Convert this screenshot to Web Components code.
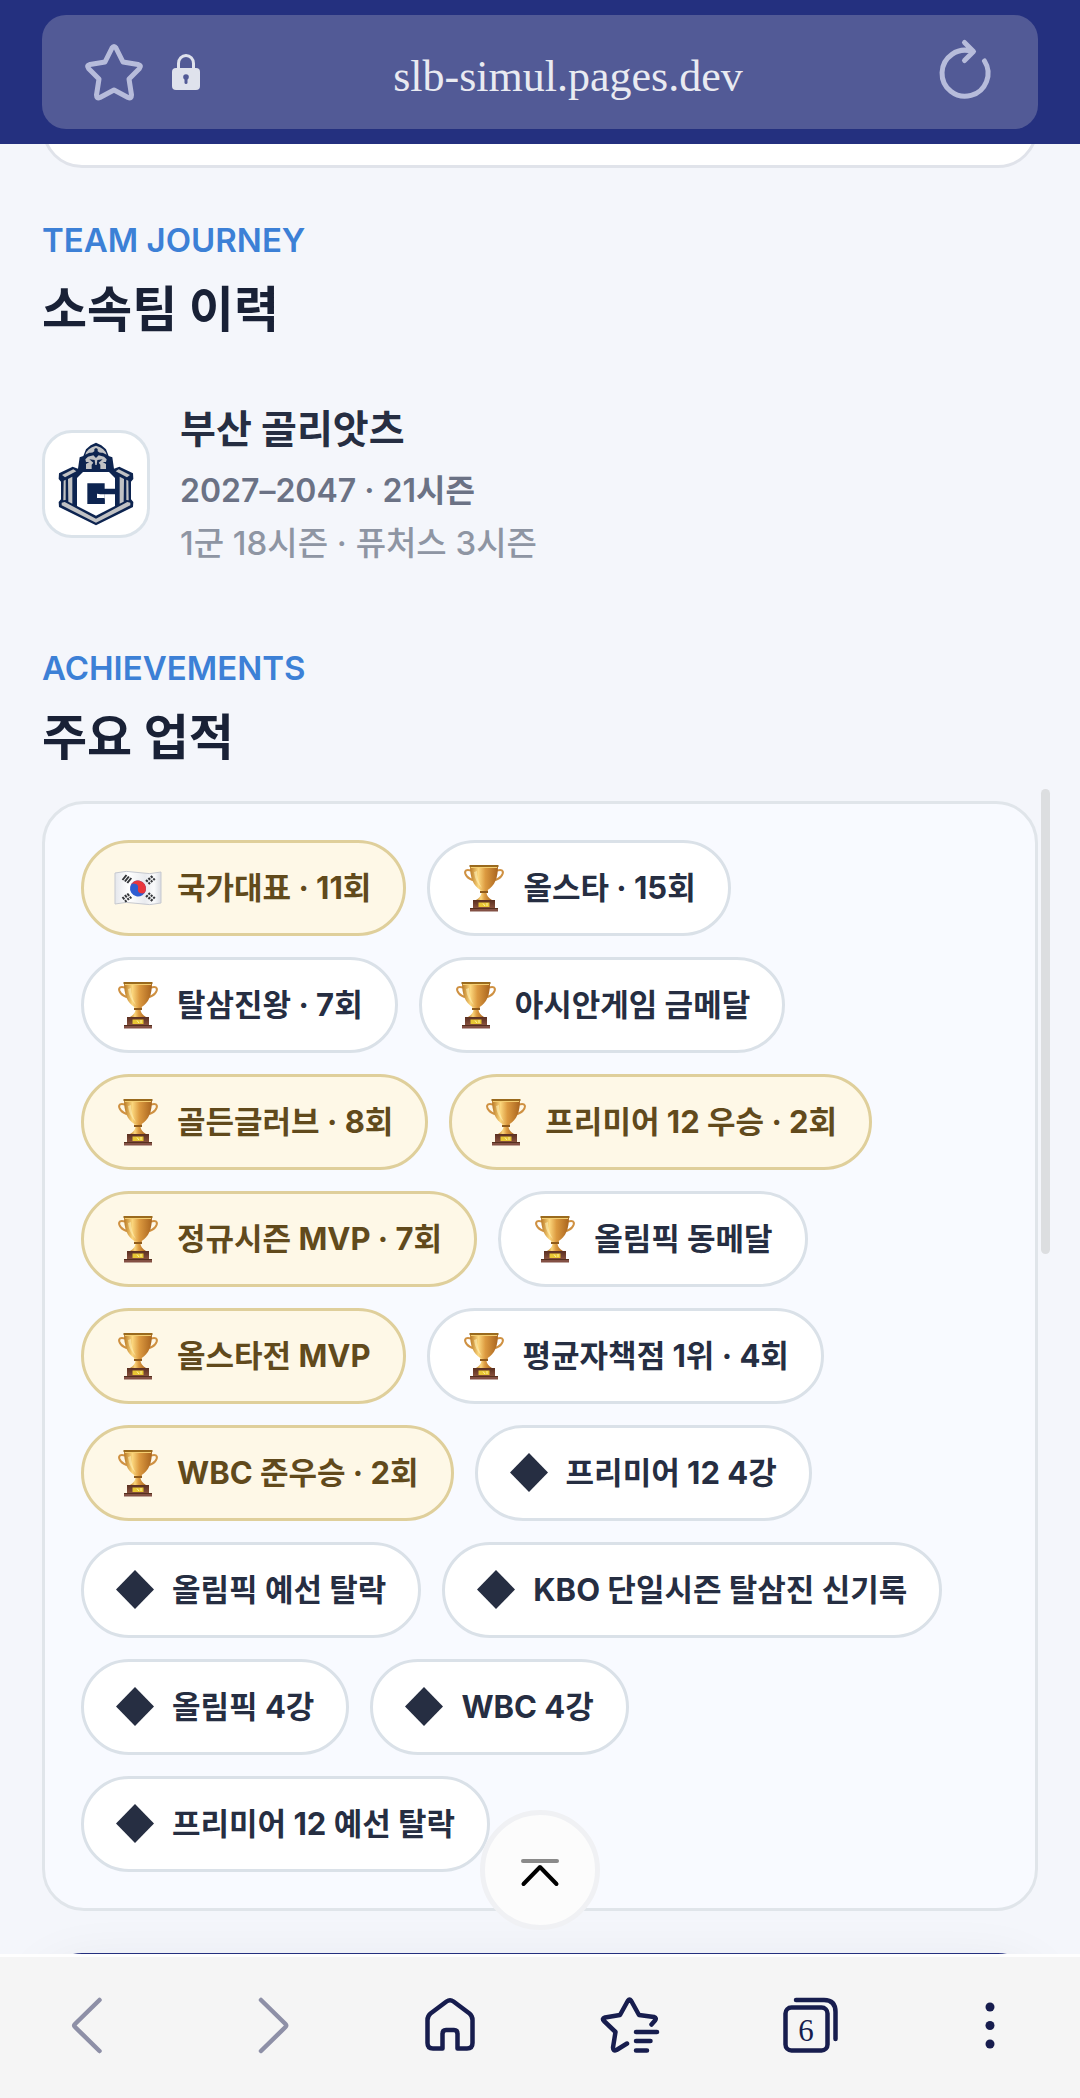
<!DOCTYPE html>
<html lang="ko">
<head>
<meta charset="UTF-8">
<meta name="viewport" content="width=device-width, initial-scale=1">
<title>선수 이력</title>
<style>
  body {
    margin: 0;
    font-family: Inter, "Noto Sans CJK KR", sans-serif;
    background: #f4f6fb;
    color: #192136;
  }
</style>
</head>
<body>
<app-shell>
  <address-bar slot="top" url="slb-simul.pages.dev"></address-bar>

  <peek-card edge="bottom"></peek-card>

  <page-section eyebrow="TEAM JOURNEY" heading="소속팀 이력">
    <team-row name="부산 골리앗츠" period="2027–2047 · 21시즌" detail="1군 18시즌 · 퓨처스 3시즌"></team-row>
  </page-section>

  <page-section eyebrow="ACHIEVEMENTS" heading="주요 업적">
    <chip-list>
      <achievement-chip icon="flag" gold>국가대표 · 11회</achievement-chip>
      <achievement-chip icon="trophy">올스타 · 15회</achievement-chip>
      <achievement-chip icon="trophy">탈삼진왕 · 7회</achievement-chip>
      <achievement-chip icon="trophy">아시안게임 금메달</achievement-chip>
      <achievement-chip icon="trophy" gold>골든글러브 · 8회</achievement-chip>
      <achievement-chip icon="trophy" gold>프리미어 12 우승 · 2회</achievement-chip>
      <achievement-chip icon="trophy" gold>정규시즌 MVP · 7회</achievement-chip>
      <achievement-chip icon="trophy">올림픽 동메달</achievement-chip>
      <achievement-chip icon="trophy" gold>올스타전 MVP</achievement-chip>
      <achievement-chip icon="trophy">평균자책점 1위 · 4회</achievement-chip>
      <achievement-chip icon="trophy" gold>WBC 준우승 · 2회</achievement-chip>
      <achievement-chip icon="diamond">프리미어 12 4강</achievement-chip>
      <achievement-chip icon="diamond">올림픽 예선 탈락</achievement-chip>
      <achievement-chip icon="diamond">KBO 단일시즌 탈삼진 신기록</achievement-chip>
      <achievement-chip icon="diamond">올림픽 4강</achievement-chip>
      <achievement-chip icon="diamond">WBC 4강</achievement-chip>
      <achievement-chip icon="diamond">프리미어 12 예선 탈락</achievement-chip>
    </chip-list>
  </page-section>

  <peek-card edge="top"></peek-card>

  <top-button slot="overlay"></top-button>
  <nav-bar slot="bottom" tabs="6"></nav-bar>
</app-shell>

<script>
  // App shell: fixed bars above and below, page content between them
  class AppShell extends HTMLElement {
    connectedCallback() {
      this.attachShadow({ mode: "open" });
      this.shadowRoot.innerHTML = `
        <style>
          :host {
            display: flex;
            flex-direction: column;
            height: 100vh;
          }
          .view {
            position: relative;
            flex: 1;
            min-height: 0;
            overflow: hidden;
          }
          main {
            display: flex;
            flex-direction: column;
            padding: 0 42px;
          }
          /* scroll indicator */
          .thumb {
            position: absolute;
            top: 645px;
            right: 30px;
            width: 9px;
            height: 465px;
            border-radius: 5px;
            background: #dcdee0;
          }
        </style>
        <slot name="top"></slot>
        <div class="view">
          <main><slot></slot></main>
          <div class="thumb"></div>
          <slot name="overlay"></slot>
        </div>
        <slot name="bottom"></slot>
      `;
    }
  }
  customElements.define("app-shell", AppShell);

  class AddressBar extends HTMLElement {
    connectedCallback() {
      this.attachShadow({ mode: "open" });
      this.shadowRoot.innerHTML = `
        <style>
          :host {
            display: block;
            padding: 15px 42px;
            background: #24307f;
          }
          .pill {
            display: flex;
            align-items: center;
            height: 114px;
            padding: 0 42px;
            border-radius: 24px;
            background: #525a96;
            box-sizing: border-box;
          }
          button {
            flex: none;
            padding: 0;
            border: 0;
            background: none;
            color: #b7bcdb;
          }
          svg {
            display: block;
            overflow: visible;
            fill: none;
            stroke: currentColor;
            stroke-width: 5;
            stroke-linecap: round;
            stroke-linejoin: round;
          }
          .lock {
            flex: none;
            margin-left: 28px;
            color: #dfe2ec;
          }
          input {
            flex: 1;
            min-width: 0;
            height: 60px;
            padding: 8px 0 0;
            border: 0;
            background: none;
            box-sizing: border-box;
            color: #e9eaf1;
            font: 44px "Liberation Serif", serif;
            text-align: center;
            outline: none;
          }
        </style>
        <div class="pill">
          <button aria-label="북마크">
            <svg width="60" height="60" viewBox="0 0 60 60">
              <path d="M28 6Q30 3 32 6L39 20L54 22.500Q58 23.500 55.500 26.500L45 37L47.500 53Q47.500 57 44 55.500L30 48L16 55.500Q12.500 57 12.500 53L15 37L4.500 26.500Q2 23.500 6 22.500L21 20Z"/>
            </svg>
          </button>
          <svg class="lock" width="28" height="36" viewBox="0 0 28 36">
            <path stroke-width="3" d="M6.500 15V9.500a7.500 8 0 0 1 15 0V15"/>
            <rect x="0" y="14" width="28" height="22" rx="4" fill="#dfe2ec" stroke="none"/>
            <path d="M14 23.500v5" stroke="#525a96" stroke-width="3"/>
            <circle cx="14" cy="23" r="2.800" fill="#525a96" stroke="none"/>
          </svg>
          <input type="text" aria-label="주소" value="${this.getAttribute("url")}">
          <button aria-label="새로고침">
            <svg width="60" height="60" viewBox="0 0 60 60">
              <path d="M48.500 19A23 23 0 1 1 36.500 9.500M28.500 0.500L37.500 9.500L28.500 18.500"/>
            </svg>
          </button>
        </div>
      `;
    }
  }
  customElements.define("address-bar", AddressBar);

  // Neighbouring cards that are mostly scrolled out of view
  class PeekCard extends HTMLElement {
    connectedCallback() {
      this.attachShadow({ mode: "open" });
      this.shadowRoot.innerHTML = `
        <style>
          :host {
            display: block;
            flex: none;
            height: 120px;
            border-radius: 40px;
            box-sizing: border-box;
          }
          :host([edge="bottom"]) {
            margin-top: -96px;
            border: 3px solid #e0e3ea;
            background: #ffffff;
          }
          :host([edge="top"]) {
            margin-top: 42px;
            background: #24307f;
            box-shadow: 0 18px 60px rgba(25, 33, 54, 0.09);
          }
        </style>
      `;
    }
  }
  customElements.define("peek-card", PeekCard);

  class PageSection extends HTMLElement {
    connectedCallback() {
      this.attachShadow({ mode: "open" });
      this.shadowRoot.innerHTML = `
        <style>
          :host {
            display: block;
            padding-top: 48px;
          }
          :host(:nth-of-type(2)) {
            padding-top: 75px;
          }
          p {
            margin: 0 0 13px;
            color: #3c80d6;
            font-size: 33px;
            font-weight: 600;
            line-height: 48px;
          }
          h2 {
            margin: 0;
            color: #192136;
            font-size: 49px;
            font-weight: 700;
            line-height: 66px;
          }
          .body {
            padding-top: 30px;
          }
        </style>
        <p>${this.getAttribute("eyebrow")}</p>
        <h2>${this.getAttribute("heading")}</h2>
        <div class="body"><slot></slot></div>
      `;
    }
  }
  customElements.define("page-section", PageSection);

  class TeamRow extends HTMLElement {
    connectedCallback() {
      this.attachShadow({ mode: "open" });
      this.shadowRoot.innerHTML = `
        <style>
          :host {
            display: flex;
            align-items: center;
            gap: 30px;
            padding-top: 26px;
          }
          .logo {
            flex: none;
            width: 102px;
            height: 102px;
            border: 3px solid #dbe3ea;
            border-radius: 30px;
            background: #ffffff;
          }
          .logo svg {
            display: block;
          }
          h3, p {
            margin: 0;
          }
          h3 {
            margin-bottom: 6px;
            color: #262e42;
            font-size: 39px;
            font-weight: 700;
            line-height: 60px;
          }
          p {
            color: #6b7285;
            font-size: 32px;
            font-weight: 600;
            line-height: 52px;
          }
          .detail {
            color: #8e95a3;
            font-size: 33px;
            font-weight: 500;
          }
        </style>
        <div class="logo">
          <svg width="102" height="102" viewBox="45 69 306 306" role="img" aria-label="골리앗츠">
            <path fill="#0d2450" d="M198 98L214 106L228 118L236 138L247 142L252 176L268 170L309 190L310 207L303 215L303 268L310 276L309 291L198 346L87 291L86 276L93 268L93 215L86 207L87 190L128 170L144 176L149 142L160 138L168 118L182 106Z"/>
            <g fill="#c1c2c4">
              <path d="M166 134Q171 114 198 107Q225 114 230 134L218 128Q210 130 203 124V117L198 114L193 117V124Q186 130 178 128Z"/>
              <path d="M174 140L190 136L198 144L206 136L222 140L230 148L228 156L218 156L228 162V177H211V164L206 158L218 148L202 150L200 165H196L194 150L178 148L190 158L185 164V177H168V162L178 156L168 156L166 148Z"/>
              <path d="M96 195L130 178L139 184L105 202Z"/>
              <path d="M300 195L266 178L257 184L291 202Z"/>
              <path d="M114 207L127 200V281L115 275ZM269 200L282 207L281 275L269 281Z"/>
              <path d="M101 212L107 209V270L100 271ZM295 212L289 209V270L296 271Z"/>
              <path d="M95 278L104 276L198 326L292 276L301 278V286L198 338L95 286Z"/>
            </g>
            <path fill="#ffffff" d="M159 186H237L255 204V288L198 317L141 288V204Z"/>
            <path fill="#0d2450" d="M172 220H224V236H262V253H211L200 244V268H224V282H172Z"/>
            <path fill="#0d2450" d="M196 240H224V282H196Z"/>
            <path fill="#ffffff" d="M201 251L211 253H224V264H201Z"/>
          </svg>
        </div>
        <div>
          <h3>${this.getAttribute("name")}</h3>
          <p>${this.getAttribute("period")}</p>
          <p class="detail">${this.getAttribute("detail")}</p>
        </div>
      `;
    }
  }
  customElements.define("team-row", TeamRow);

  class ChipList extends HTMLElement {
    connectedCallback() {
      this.attachShadow({ mode: "open" });
      this.setAttribute("role", "list");
      this.shadowRoot.innerHTML = `
        <style>
          :host {
            display: flex;
            flex-wrap: wrap;
            gap: 21px;
            padding: 36px;
            border: 3px solid #e0e5ea;
            border-radius: 42px;
            background: #f8faff;
          }
        </style>
        <slot></slot>
      `;
    }
  }
  customElements.define("chip-list", ChipList);

  const chipIcons = {
    trophy: `
      <svg width="44" height="48" viewBox="0 0 44 48">
        <defs>
          <linearGradient id="cup">
            <stop offset="0" stop-color="#b97824"/>
            <stop offset="0.3" stop-color="#fbd67c"/>
            <stop offset="0.55" stop-color="#dc9a40"/>
            <stop offset="1" stop-color="#a9641e"/>
          </linearGradient>
          <linearGradient id="base" x2="0" y2="1">
            <stop offset="0" stop-color="#5a2f20"/>
            <stop offset="1" stop-color="#87503c"/>
          </linearGradient>
        </defs>
        <path d="M9 6.500C2 4.500 2 9 5 12.500Q7.500 15.500 12 16M35 6.500C42 4.500 42 9 39 12.500Q36.500 15.500 32 16" fill="none" stroke="#cf9142" stroke-width="2"/>
        <path d="M8 2H36C36 13 33 22 25 26.500H19C11 22 8 13 8 2Z" fill="url(#cup)"/>
        <path d="M7.500 1H36.500V3H7.500Z" fill="#9a6a1d"/>
        <path d="M9 3.500H35" stroke="#f5cf72" stroke-width="1"/>
        <path d="M12 8Q13 18 20 24Q15 16 15 7Z" fill="#fff0b5" opacity="0.6"/>
        <path d="M18 26H26L24.500 29Q25 33 30 36H14Q19 33 19.500 29Z" fill="url(#cup)"/>
        <path d="M18 28H26" stroke="#8f5b1c" stroke-width="2"/>
        <path d="M11 36H33V44H11Z" fill="url(#base)"/>
        <path d="M8 44H36V47.500H8Z" fill="#835044"/>
        <path d="M8 44.500H36" stroke="#56301f" stroke-width="1"/>
        <path d="M16.500 38.500H27.500V43H16.500Z" fill="#e8c634"/>
        <path d="M21 39.500L23 42M25 39V42" stroke="#fff3a0"/>
      </svg>`,
    flag: `
      <svg width="44" height="48" viewBox="0 0 44 48">
        <defs>
          <linearGradient id="cloth">
            <stop offset="0" stop-color="#e5e7ec"/>
            <stop offset="0.3" stop-color="#ffffff"/>
            <stop offset="0.65" stop-color="#e9ebef"/>
            <stop offset="0.85" stop-color="#fafbfc"/>
            <stop offset="1" stop-color="#d9dce2"/>
          </linearGradient>
        </defs>
        <path d="M-1 9Q10 6 22 8.500Q34 11 45 8V39Q34 42 22 39.500Q10 37 -1 40Z" fill="url(#cloth)" stroke="#c6c9d0" stroke-width="1"/>
        <g transform="rotate(12 22 24.500)">
          <circle cx="22" cy="24.500" r="8" fill="#2e5cd0"/>
          <path d="M14 24.500a8 8 0 0 1 16 0a4 4 0 0 1-8 0a4 4 0 0 0-8 0Z" fill="#e9363c"/>
        </g>
        <g stroke="#34363a" stroke-width="2" fill="none">
          <path d="M6.500 16L10.500 11M8.900 17.500L12.900 12.500M11.300 19L15.300 14"/>
          <path d="M30 16L34 20M32.400 14L36.400 18M34.800 12L38.800 16" stroke-dasharray="2.500 1 3"/>
          <path d="M6.500 33L10.500 38M8.900 31L12.900 36M11.300 29.500L15.300 34.500" stroke-dasharray="3 1 3"/>
          <path d="M30 33L34 29M32.400 35L36.400 31M34.800 37L38.800 33" stroke-dasharray="2.500 1 3"/>
        </g>
      </svg>`,
    diamond: `
      <svg width="39" height="40" viewBox="0 0 39 40">
        <path d="M19 0L38 19.500L19 39L0 19.500Z" fill="currentColor"/>
      </svg>`,
  };

  class AchievementChip extends HTMLElement {
    connectedCallback() {
      this.attachShadow({ mode: "open" });
      this.setAttribute("role", "listitem");
      this.shadowRoot.innerHTML = `
        <style>
          :host {
            display: flex;
            align-items: center;
            gap: 17px;
            height: 96px;
            padding: 0 32px;
            border: 3px solid #dae1e8;
            border-radius: 48px;
            box-sizing: border-box;
            background: #ffffff;
            color: #262e42;
            font-size: 31px;
            font-weight: 700;
            white-space: nowrap;
          }
          :host([gold]) {
            border-color: #dfcf9b;
            background: #fef8e7;
            color: #614a1c;
          }
          svg {
            display: block;
            flex: none;
            overflow: visible;
          }
          span {
            padding-bottom: 5px;
          }
        </style>
        ${chipIcons[this.getAttribute("icon")]}
        <span><slot></slot></span>
      `;
    }
  }
  customElements.define("achievement-chip", AchievementChip);

  class TopButton extends HTMLElement {
    connectedCallback() {
      this.attachShadow({ mode: "open" });
      this.shadowRoot.innerHTML = `
        <style>
          :host {
            position: absolute;
            bottom: 24px;
            left: 50%;
            transform: translateX(-50%);
          }
          button {
            display: flex;
            align-items: center;
            justify-content: center;
            width: 120px;
            height: 120px;
            padding: 0;
            border: 5px solid #f0f1f4;
            border-radius: 50%;
            background: #fcfcfc;
          }
          svg {
            display: block;
            fill: none;
            stroke: #000000;
            stroke-width: 4;
            stroke-linecap: round;
            stroke-linejoin: round;
          }
        </style>
        <button aria-label="맨 위로">
          <svg width="48" height="48" viewBox="0 0 48 48">
            <path d="M7 15H41" stroke="#8a8a8a"/>
            <path d="M7.500 38L24 21L40.500 38"/>
          </svg>
        </button>
      `;
    }
  }
  customElements.define("top-button", TopButton);

  class NavBar extends HTMLElement {
    connectedCallback() {
      this.attachShadow({ mode: "open" });
      this.shadowRoot.innerHTML = `
        <style>
          :host {
            display: block;
            border-top: 3px solid #fefefe;
            background: #f5f5f5;
          }
          nav {
            display: grid;
            grid-template-columns: repeat(6, 1fr);
            height: 138px;
            padding-bottom: 3px;
          }
          button {
            display: flex;
            align-items: center;
            justify-content: center;
            padding: 0;
            border: 0;
            background: none;
            color: #171d4e;
          }
          .dim {
            color: #8e90a7;
          }
          svg {
            display: block;
            fill: none;
            stroke: currentColor;
            stroke-width: 4.500;
            stroke-linecap: round;
            stroke-linejoin: round;
          }
          text {
            fill: currentColor;
            stroke: none;
            font: 31px "Liberation Serif", serif;
          }
        </style>
        <nav>
          <button class="dim" aria-label="뒤로">
            <svg width="60" height="60" viewBox="0 0 60 60"><path d="M39.500 4L15 28Q13.500 29.500 15 31L39.500 55"/></svg>
          </button>
          <button class="dim" aria-label="앞으로">
            <svg width="60" height="60" viewBox="0 0 60 60"><path d="M21 4L45.500 28Q47 29.500 45.500 31L21 55"/></svg>
          </button>
          <button aria-label="홈">
            <svg width="60" height="60" viewBox="0 0 60 60">
              <path d="M22.500 52.500H13Q7.500 52.500 7.500 47V24Q7.500 20 10.500 17.500L26.500 5.500Q30 3 33.500 5.500L49.500 17.500Q52.500 20 52.500 24V47Q52.500 52.500 47 52.500H37.500V38Q37.500 34 34 34H26Q22.500 34 22.500 38Z"/>
            </svg>
          </button>
          <button aria-label="북마크 목록">
            <svg width="60" height="60" viewBox="0 0 60 60">
              <path d="M51.500 28.500L55 24.500Q57 22 54 21L39 19L31 4.500Q29.500 2.500 28 4.500L20 19L5 21.500Q1.500 22.500 4 25L15.500 36L13 51.500Q13 55.500 16.500 54L27 47.500M36 36H57M36 45H50.500M36 54.500H47"/>
            </svg>
          </button>
          <button aria-label="탭">
            <svg width="60" height="60" viewBox="0 0 60 60">
              <rect x="5.500" y="11.500" width="42" height="43" rx="6"/>
              <path d="M16 4H44Q55.500 4 55.500 16V43"/>
              <text x="26" y="45" text-anchor="middle">${this.getAttribute("tabs")}</text>
            </svg>
          </button>
          <button aria-label="메뉴">
            <svg width="60" height="60" viewBox="0 0 60 60">
              <g fill="currentColor" stroke="none">
                <circle cx="30" cy="11" r="4.500"/>
                <circle cx="30" cy="29.500" r="4.500"/>
                <circle cx="30" cy="48" r="4.500"/>
              </g>
            </svg>
          </button>
        </nav>
      `;
    }
  }
  customElements.define("nav-bar", NavBar);
</script>
</body>
</html>
